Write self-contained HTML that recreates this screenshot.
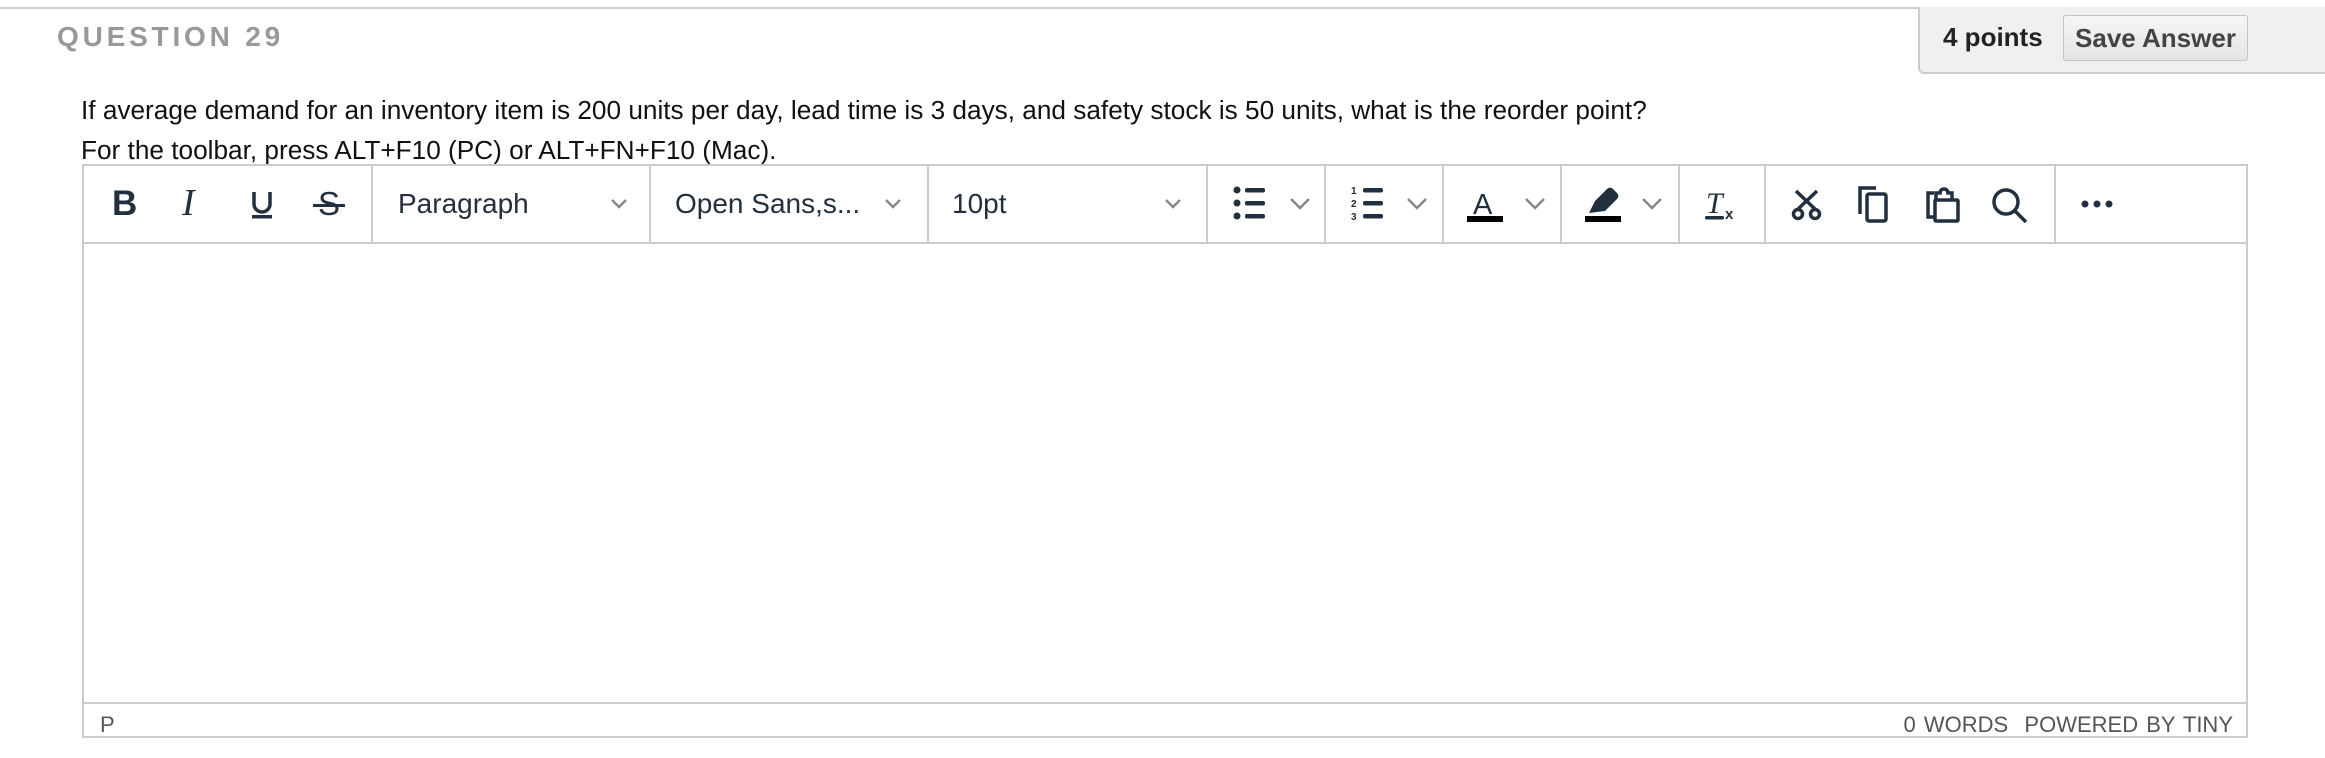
<!DOCTYPE html>
<html><head><meta charset="utf-8"><style>
*{margin:0;padding:0;box-sizing:border-box}
body{width:2325px;height:758px;background:#fff;position:relative;overflow:hidden;font-family:"Liberation Sans",Arial,sans-serif}
.a{position:absolute}
.t{position:absolute;white-space:nowrap;line-height:1}
.sep{position:absolute;top:164px;width:2px;height:80px;background:#ccc}
.tb{color:#222f3e;font-size:28px;top:190px}
svg{position:absolute;overflow:visible}
</style></head><body>
<div class="a" style="left:0;top:7px;width:2325px;height:2px;background:#ccc"></div>
<div class="a" style="left:1918px;top:7px;width:407px;height:67px;background:#f0f0f0;border-left:2px solid #ccc;border-bottom:2px solid #ccc;border-bottom-left-radius:6px"></div>
<div class="t" style="left:57px;top:23px;font-size:28px;font-weight:bold;color:#999;letter-spacing:3.8px">QUESTION 29</div>
<div class="t" style="left:1943px;top:24px;font-size:26px;font-weight:bold;color:#222">4 points</div>
<div class="a" style="left:2063px;top:15px;width:185px;height:46px;border:1px solid #c4c4c4;border-radius:3px;background:linear-gradient(#f6f6f6,#e4e4e4)"></div>
<div class="t" style="left:2063px;top:25px;width:185px;text-align:center;font-size:26px;font-weight:bold;color:#444">Save Answer</div>

<div class="t" style="left:81px;top:97px;font-size:26.2px;color:#111">If average demand for an inventory item is 200 units per day, lead time is 3 days, and safety stock is 50 units, what is the reorder point?</div>
<div class="t" style="left:81px;top:137px;font-size:26.2px;color:#111">For the toolbar, press ALT+F10 (PC) or ALT+FN+F10 (Mac).</div>

<div class="a" style="left:82px;top:164px;width:2166px;height:574px;border:2px solid #ccc"></div>
<div class="a" style="left:82px;top:242px;width:2166px;height:2px;background:#ccc"></div>
<div class="a" style="left:82px;top:702px;width:2166px;height:2px;background:#ccc"></div>

<div class="sep" style="left:371px"></div>
<div class="sep" style="left:649px"></div>
<div class="sep" style="left:927px"></div>
<div class="sep" style="left:1206px"></div>
<div class="sep" style="left:1324px"></div>
<div class="sep" style="left:1442px"></div>
<div class="sep" style="left:1560px"></div>
<div class="sep" style="left:1678px"></div>
<div class="sep" style="left:1764px"></div>
<div class="sep" style="left:2054px"></div>

<div class="t tb" style="left:112px;font-weight:bold;font-size:35px;top:186px">B</div>
<div class="t tb" style="left:182px;font-family:'Liberation Serif',serif;font-style:italic;font-size:38px;top:184px">I</div>
<svg style="left:251px;top:192px" width="24" height="30"><path d="M3 0v12a8 8 0 0 0 16 0V0" fill="none" stroke="#222f3e" stroke-width="3.5"/><rect x="1" y="23" width="20" height="3.5" fill="#222f3e"/></svg>
<div class="t tb" style="left:318px;font-size:33px;top:187px">S</div>
<div class="a" style="left:313px;top:204px;width:32px;height:3px;background:#222f3e"></div>

<div class="t tb" style="left:398px">Paragraph</div>
<div class="t tb" style="left:675px">Open Sans,s...</div>
<div class="t tb" style="left:952px">10pt</div>

<svg width="2325" height="758" style="left:0;top:0">
<g fill="none" stroke="#888" stroke-width="2.5">
<path d="M612 200l7 7 7-7"/><path d="M886 200l7 7 7-7"/><path d="M1166 200l7 7 7-7"/>
<path d="M1291 199l9 9 9-9"/><path d="M1408 199l9 9 9-9"/><path d="M1526 199l9 9 9-9"/><path d="M1643 199l9 9 9-9"/>
</g>
<g fill="#222f3e">
<circle cx="1237" cy="190" r="3.5"/><circle cx="1237" cy="203" r="3.5"/><circle cx="1237" cy="216" r="3.5"/>
<rect x="1245" y="188" width="20" height="4.5" rx="2"/><rect x="1245" y="201" width="20" height="4.5" rx="2"/><rect x="1245" y="214" width="20" height="4.5" rx="2"/>
<rect x="1363" y="188" width="20" height="4.5" rx="2"/><rect x="1363" y="201" width="20" height="4.5" rx="2"/><rect x="1363" y="214" width="20" height="4.5" rx="2"/>
<text x="1351" y="194" font-size="10" font-weight="bold" font-family="Liberation Sans">1</text>
<text x="1351" y="207" font-size="10" font-weight="bold" font-family="Liberation Sans">2</text>
<text x="1351" y="220" font-size="10" font-weight="bold" font-family="Liberation Sans">3</text>
<text x="1473" y="214" font-size="29" font-family="Liberation Sans">A</text>
<rect x="1467" y="216" width="36" height="6" fill="#000"/>
<path d="M1589 213l6-12 12-12 a4 4 0 0 1 6 0l4 4a4 4 0 0 1 0 6l-12 12z"/>
<rect x="1585" y="216" width="36" height="6" fill="#000"/>
<text x="1706" y="213" font-size="30" font-style="italic" font-family="Liberation Serif">T</text>
<rect x="1705" y="216" width="19" height="3.5" rx="1.5"/>
<text x="1725" y="219" font-size="15" font-weight="bold" font-family="Liberation Sans">x</text>
</g>
<g fill="none" stroke="#222f3e" stroke-width="3.5">
<path d="M1796 191l19 18M1817 191l-19 18"/><circle cx="1798" cy="214" r="4.5"/><circle cx="1815" cy="214" r="4.5"/>
<path d="M1860 214V188h16"/><rect x="1867" y="194" width="19" height="27" rx="2"/>
<path d="M1934 193h-6v24h7"/><rect x="1935" y="200" width="23" height="21" rx="1"/><path d="M1936 200v-7h4a4 4 0 0 1 8 0h4v7"/>
<circle cx="2006" cy="202" r="12"/><path d="M2015 211l11 11"/>
</g>
<g fill="#222f3e"><circle cx="2085" cy="204" r="3.5"/><circle cx="2097" cy="204" r="3.5"/><circle cx="2109" cy="204" r="3.5"/></g>
</svg>

<div class="t" style="left:100px;top:714px;font-size:22px;color:#555">P</div>
<div class="t" style="right:92px;top:714px;font-size:22px;color:#555;word-spacing:2px">0 WORDS &nbsp;POWERED BY TINY</div>
</body></html>
